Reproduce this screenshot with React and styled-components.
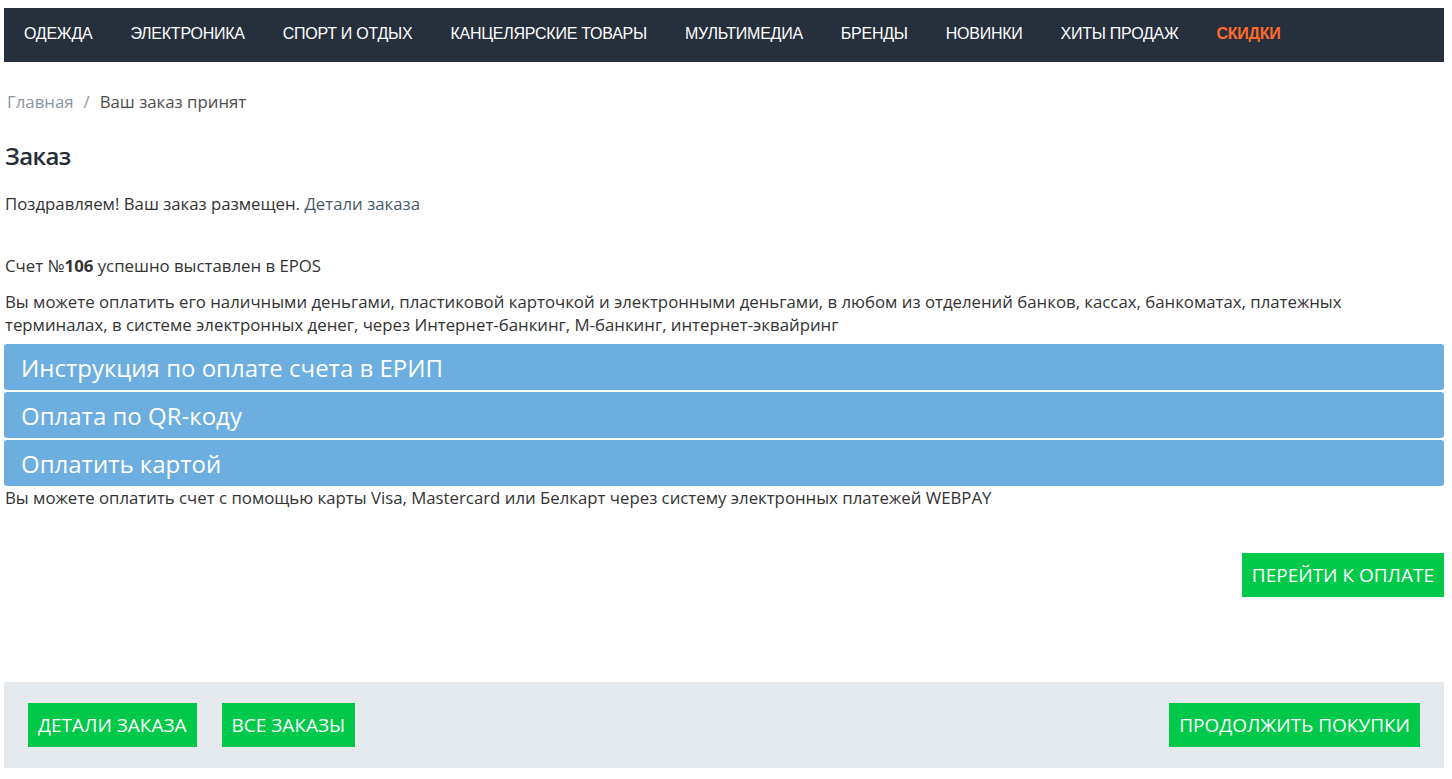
import React from 'react';
import styled, { createGlobalStyle } from 'styled-components';

const GlobalStyle = createGlobalStyle`
  body {
    margin: 0;
    padding: 8px 8px 8px 4px;
    font-family: 'Open Sans', 'Liberation Sans', sans-serif;
    color: #333;
    background: #fff;
  }
  * { box-sizing: border-box; }
`;

const menu = [
  'Одежда',
  'Электроника',
  'Спорт и отдых',
  'Канцелярские товары',
  'Мультимедиа',
  'Бренды',
  'Новинки',
  'Хиты продаж',
];

const accordion = ['Инструкция по оплате счета в ЕРИП', 'Оплата по QR-коду', 'Оплатить картой'];

const App = () => {
  return (
    <>
      <GlobalStyle />
      <Nav>
        {menu.map((item) => (
          <NavItem key={item}>{item}</NavItem>
        ))}
        <NavItem $sale>Скидки</NavItem>
      </Nav>

      <Breadcrumbs>
        <Crumb>Главная</Crumb>
        <Sep>/</Sep>
        <Crumb $active>Ваш заказ принят</Crumb>
      </Breadcrumbs>

      <Title>Заказ</Title>
      <Greeting>
        Поздравляем! Ваш заказ размещен. <Link>Детали заказа</Link>
      </Greeting>

      <Invoice>
        Счет №<b>106</b> успешно выставлен в EPOS
      </Invoice>
      <Description>
        Вы можете оплатить его наличными деньгами, пластиковой карточкой и электронными деньгами, в любом из
        отделений банков, кассах, банкоматах, платежных терминалах, в системе электронных денег, через
        Интернет-банкинг, М-банкинг, интернет-эквайринг
      </Description>

      <Accordion>
        {accordion.map((title) => (
          <AccordionHead key={title}>{title}</AccordionHead>
        ))}
      </Accordion>
      <CardNote>
        Вы можете оплатить счет с помощью карты Visa, Mastercard или Белкарт через систему электронных платежей WEBPAY
      </CardNote>

      <PayRow>
        <GreenButton>Перейти к оплате</GreenButton>
      </PayRow>

      <Footer>
        <ButtonGroup>
          <GreenButton>Детали заказа</GreenButton>
          <GreenButton>Все заказы</GreenButton>
        </ButtonGroup>
        <GreenButton>Продолжить покупки</GreenButton>
      </Footer>
    </>
  );
};

const Nav = styled.nav`
  display: flex;
  align-items: center;
  height: 54px;
  padding: 0 1px 3px;
  background-color: #262f3c;
`;

const NavItem = styled.a`
  padding: 0 19px;
  font-family: 'Liberation Sans', Arial, sans-serif;
  font-size: 16px;
  letter-spacing: -0.25px;
  text-transform: uppercase;
  color: ${(p) => (p.$sale ? '#ff6a2a' : '#fff')};
  font-weight: ${(p) => (p.$sale ? 700 : 400)};
  cursor: pointer;
`;

const Breadcrumbs = styled.div`
  display: flex;
  gap: 10px;
  margin-top: 29px;
  padding-left: 3px;
  font-size: 16.8px;
  line-height: 22px;
`;

const Crumb = styled.span`
  color: ${(p) => (p.$active ? '#4d4d4d' : '#8b95a3')};
`;

const Sep = styled.span`
  color: #8b95a3;
`;

const Title = styled.h1`
  margin: 27px 0 0 1px;
  font-size: 24px;
  font-weight: 600;
  letter-spacing: -0.6px;
  line-height: 32px;
  color: #262c35;
`;

const Text = styled.p`
  margin: 19px 0 0 1px;
  font-size: 16.8px;
  line-height: 23px;
  color: #333;
`;

const Greeting = styled(Text)`
  margin-top: 20px;
`;

const Invoice = styled(Text)`
  margin-top: 39px;
`;

const Description = styled(Text)`
  margin-top: 13px;
  padding-right: 8px;
`;

const Link = styled.a`
  color: #4a5a6b;
  cursor: pointer;
`;

const Accordion = styled.div`
  display: flex;
  flex-direction: column;
  gap: 2px;
  margin-top: 8px;
`;

const AccordionHead = styled.div`
  height: 46px;
  display: flex;
  align-items: center;
  padding: 0 17px;
  border-radius: 3px;
  background-color: #6daee0;
  color: #fff;
  font-size: 24px;
  cursor: pointer;
`;

const CardNote = styled.p`
  margin: 0 0 0 1px;
  font-size: 16.8px;
  line-height: 24px;
  color: #333;
`;

const PayRow = styled.div`
  display: flex;
  justify-content: flex-end;
  margin-top: 43px;
`;

const GreenButton = styled.button`
  height: 44px;
  padding: 0 10px;
  border: none;
  background-color: #00c94a;
  color: #fff;
  font-family: 'Open Sans', sans-serif;
  font-size: 19px;
  text-transform: uppercase;
  cursor: pointer;
`;

const Footer = styled.div`
  display: flex;
  justify-content: space-between;
  align-items: center;
  margin-top: 85px;
  padding: 21px 24px;
  background-color: #e5eaef;
`;

const ButtonGroup = styled.div`
  display: flex;
  gap: 25px;
`;

export default App;
